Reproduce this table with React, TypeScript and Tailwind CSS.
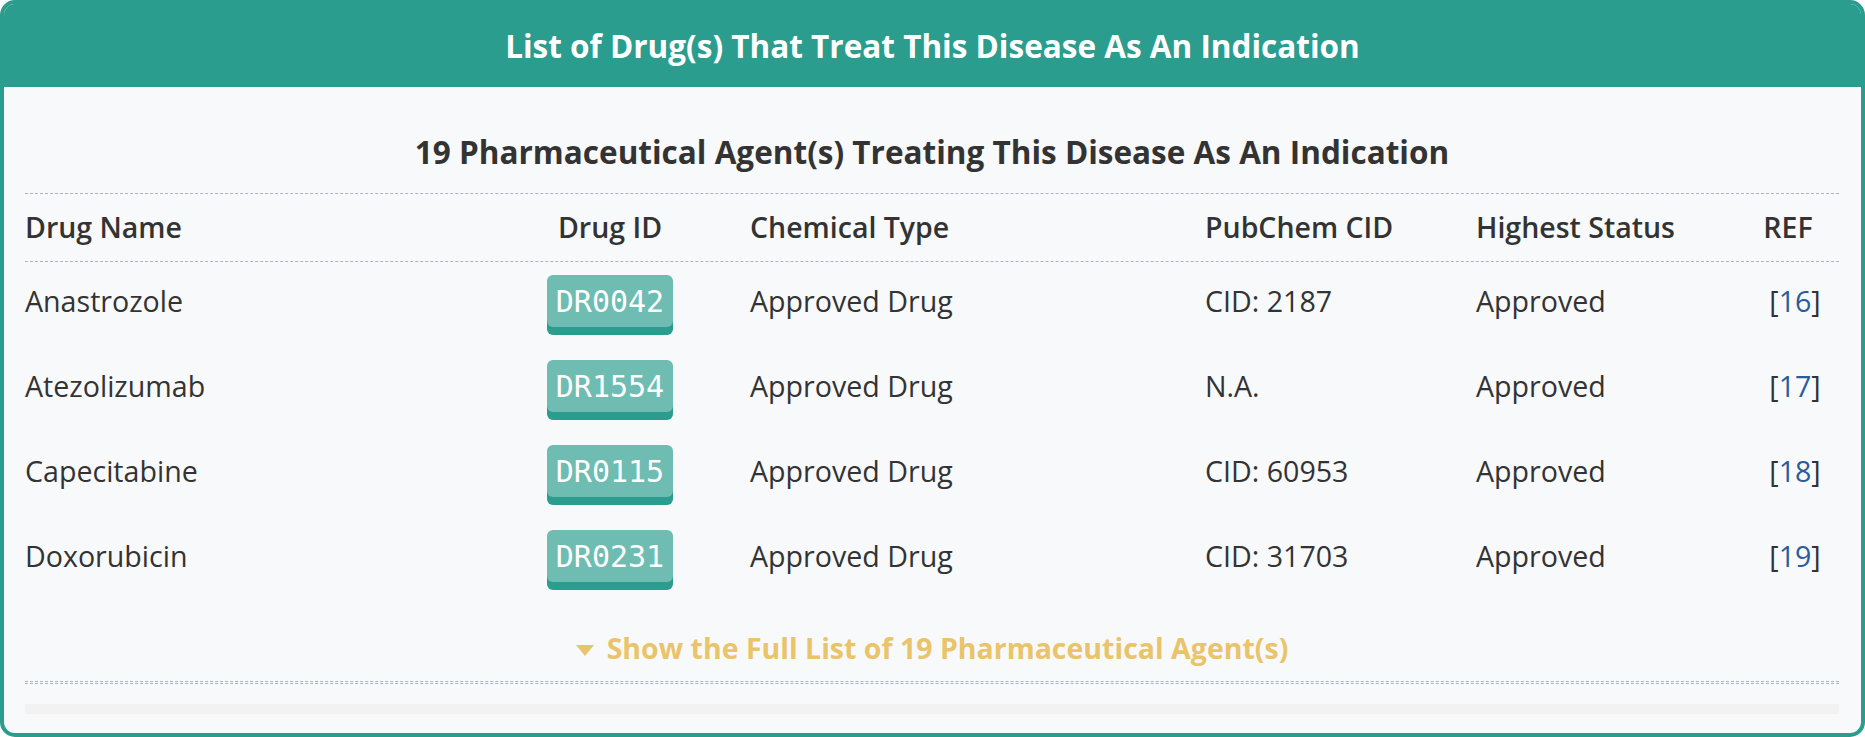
import React from 'react';

type DrugRow = {
  name: string;
  id: string;
  type: string;
  cid: string;
  status: string;
  ref: number;
};

const drugs: DrugRow[] = [
  { name: 'Anastrozole', id: 'DR0042', type: 'Approved Drug', cid: 'CID: 2187', status: 'Approved', ref: 16 },
  { name: 'Atezolizumab', id: 'DR1554', type: 'Approved Drug', cid: 'N.A.', status: 'Approved', ref: 17 },
  { name: 'Capecitabine', id: 'DR0115', type: 'Approved Drug', cid: 'CID: 60953', status: 'Approved', ref: 18 },
  { name: 'Doxorubicin', id: 'DR0231', type: 'Approved Drug', cid: 'CID: 31703', status: 'Approved', ref: 19 },
];

// shared column template so header and rows line up
const cols = 'grid grid-cols-[445px_280px_455px_271px_261px_1fr]';

function App() {
  return (
    <div className="w-[1865px] h-[737px] bg-white font-['Open_Sans',sans-serif]">
      <div className="h-full flex flex-col border-4 border-[#2a9d8f] rounded-[15px] overflow-hidden bg-[#f8f9fb]">
        {/* Title band */}
        <div className="h-[83px] -mt-[4px] pt-[4px] box-content bg-[#2a9d8f] flex items-center justify-center">
          <h2 className="text-[31.5px] leading-[40px] font-bold text-white">
            List of Drug(s) That Treat This Disease As An Indication
          </h2>
        </div>

        <div className="flex-1 px-[21px] pr-[22px] flex flex-col">
          <h3 className="pt-[43px] pb-[19px] text-center text-[31.5px] leading-[44px] font-bold text-[#333]">
            19 Pharmaceutical Agent(s) Treating This Disease As An Indication
          </h3>

          {/* Table header */}
          <div className={`${cols} h-[69px] items-center border-y border-dashed border-[#aab4c3] text-[28.5px] font-semibold text-[#333]`}>
            <div>Drug Name</div>
            <div className="text-center">Drug ID</div>
            <div>Chemical Type</div>
            <div>PubChem CID</div>
            <div>Highest Status</div>
            <div className="text-center">REF</div>
          </div>

          {/* Rows */}
          <div className="flex flex-col">
            {drugs.map((d) => (
              <div key={d.id} className={`${cols} h-[85px] pt-[13px] items-start text-[28.6px] text-[#333]`}>
                <div className="leading-[52px]">{d.name}</div>
                <div className="flex justify-center">
                  <span className="h-[52px] w-[126px] rounded-[6px] bg-[#6fbcb2] shadow-[0_8px_0_#2a9d8f] flex items-center justify-center text-white font-['DejaVu_Sans_Mono',monospace] text-[30px]">
                    {d.id}
                  </span>
                </div>
                <div className="leading-[52px]">{d.type}</div>
                <div className="leading-[52px]">{d.cid}</div>
                <div className="leading-[52px]">{d.status}</div>
                <div className="leading-[52px] text-center pl-[14px]">
                  [<a className="text-[#2b5c9a]">{d.ref}</a>]
                </div>
              </div>
            ))}
          </div>

          {/* Expander */}
          <div className="pt-[26px] pb-[13px] flex items-center justify-center gap-[13px] text-[#e9c46a]">
            <svg width="18" height="11" viewBox="0 0 18 11" className="mt-[4px]">
              <polygon points="0,0 18,0 9,11" fill="#e9c46a" />
            </svg>
            <span className="text-[28.5px] leading-[40px] font-bold">Show the Full List of 19 Pharmaceutical Agent(s)</span>
          </div>

          <div className="h-[3px] border-y border-dashed border-[#aab4c3]" />
          <div className="mt-[20px] h-[10px] bg-[#f2f2f2]" />
        </div>
      </div>
    </div>
  );
}

export default App;
